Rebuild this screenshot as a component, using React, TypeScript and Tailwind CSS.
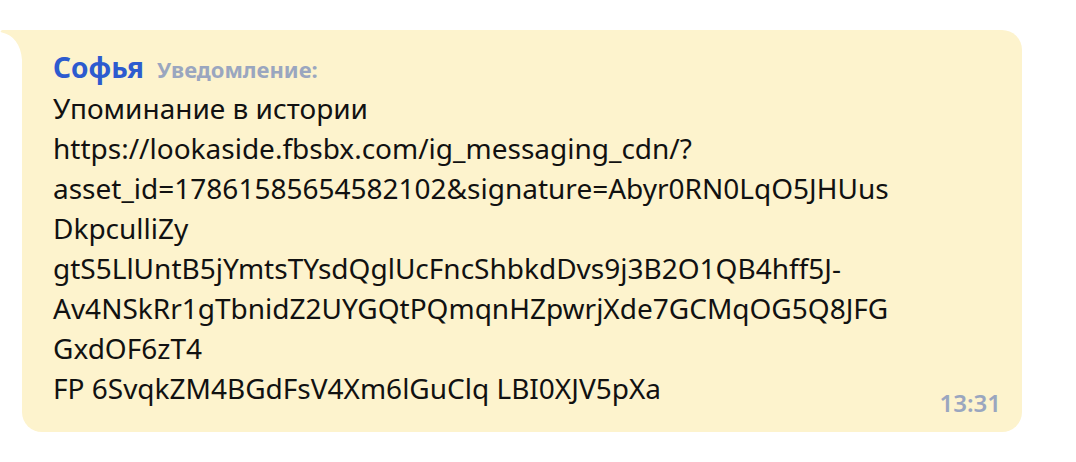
export default function App() {
  const lines = [
    "Упоминание в истории",
    "https://lookaside.fbsbx.com/ig_messaging_cdn/?",
    "asset_id=17861585654582102&signature=Abyr0RN0LqO5JHUus",
    "DkpculliZy",
    "gtS5LlUntB5jYmtsTYsdQglUcFncShbkdDvs9j3B2O1QB4hff5J-",
    "Av4NSkRr1gTbnidZ2UYGQtPQmqnHZpwrjXde7GCMqOG5Q8JFG",
    "GxdOF6zT4",
    "FP 6SvqkZM4BGdFsV4Xm6lGuClq LBI0XJV5pXa",
  ];
  return (
    <div
      className="w-[1076px] h-[462px] bg-white overflow-hidden pt-[30px]"
      style={{ fontFamily: '"Noto Sans", "Open Sans", sans-serif' }}
    >
      <div className="relative ml-[22px] w-[1000px] h-[402px] bg-[#fdf3cd] rounded-[20px] rounded-tl-none pl-[31px] pr-[24px] pt-[19px]">
        <svg
          className="absolute left-[-22px] top-0"
          width="22"
          height="30"
          viewBox="0 0 22 30"
        >
          <path d="M4 0 H22 V30 C21 14 13 5 2 2.5 C0 2 0 0 4 0 Z" fill="#fdf3cd" />
        </svg>
        <div className="flex items-baseline gap-[13px] h-[36px]">
          <span className="text-[28px] leading-[36px] font-bold text-[#2d5bcf]">Софья</span>
          <span className="text-[22px] font-bold text-[#9aa6bf]">Уведомление:</span>
        </div>
        <div className="text-[28px] leading-[40px] text-[#111111] mt-[3px]">
          {lines.map((l, i) => (
            <div key={i} className="whitespace-pre">
              {l}
            </div>
          ))}
        </div>
        <div className="absolute right-[21px] bottom-[11px] text-[24px] font-semibold text-[#9aa6bf]">
          13:31
        </div>
      </div>
    </div>
  );
}
